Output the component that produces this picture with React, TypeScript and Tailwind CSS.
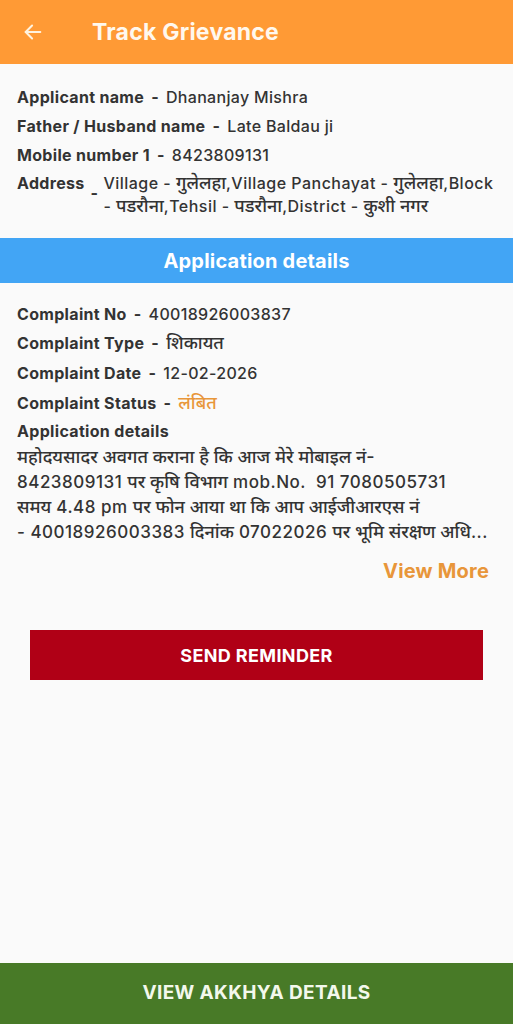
import React from "react";

const font = { fontFamily: 'Inter, "Noto Sans", "Noto Sans Devanagari", "Lohit Devanagari", sans-serif' };

function D({ children }: { children: React.ReactNode }) {
  return <span className="text-[18px] leading-none tracking-normal">{children}</span>;
}

function Row({ label, value, valueClass = "", h = "h-[29px]" }: { label: string; value: React.ReactNode; valueClass?: string; h?: string }) {
  return (
    <div className={`flex items-center whitespace-nowrap text-[16px] tracking-[0.02em] text-[#333333] ${h}`}>
      <span className="font-bold">{label}</span>
      <span className="ml-[7px] mr-[7px] font-bold">-</span>
      <span className={`font-medium ${valueClass}`}>{value}</span>
    </div>
  );
}

export default function App() {
  return (
    <div className="flex h-[1024px] w-[513px] flex-col bg-[#fafafa]" style={font}>
      <header className="flex h-[64px] shrink-0 items-center bg-[#ff9a35] pl-[22px]">
        <svg width="22" height="22" viewBox="0 0 24 24" fill="none" stroke="#fff3e0" strokeWidth="2.2" strokeLinecap="round" strokeLinejoin="round">
          <path d="M20 12H4" />
          <path d="M11 5l-7 7 7 7" />
        </svg>
        <h1 className="ml-[48px] text-[23px] font-bold tracking-[0.01em] text-[#fff8ee]">Track Grievance</h1>
      </header>

      <section className="px-[17px] pt-[18px] pb-[20px]">
        <Row label="Applicant name" value="Dhananjay Mishra" />
        <Row label="Father / Husband name" value="Late Baldau ji" />
        <Row label="Mobile number 1" value="8423809131" />
        <div className="flex text-[16px] tracking-[0.02em] text-[#333333]">
          <span className="font-bold leading-[29px]">Address</span>
          <span className="ml-[6px] mr-[5px] mt-[10px] font-bold leading-[29px]">-</span>
          <span className="whitespace-nowrap pt-[3px] font-medium leading-[23px] tracking-[0.03em]">
            Village - <D>गुलेलहा</D>,Village Panchayat - <D>गुलेलहा</D>,Block
            <br />- <D>पडरौना</D>,Tehsil - <D>पडरौना</D>,District - <D>कुशी नगर</D>
          </span>
        </div>
      </section>

      <div className="flex h-[45px] shrink-0 items-center justify-center bg-[#42a5f5] text-[20px] font-bold tracking-[0.01em] text-white">
        Application details
      </div>

      <section className="px-[17px] pt-[16px]">
        <Row label="Complaint No" value="40018926003837" />
        <Row label="Complaint Type" value={<D>शिकायत</D>} />
        <Row label="Complaint Date" value="12-02-2026" h="h-[32px]" />
        <Row label="Complaint Status" value={<D>लंबित</D>} valueClass="text-[#e8963a]" h="h-[28px]" />
        <div className="text-[16px] font-bold leading-[28px] tracking-[0.02em] text-[#333333]">Application details</div>
        <p className="whitespace-nowrap text-[17px] font-medium leading-[25px] tracking-[0.03em] text-[#333333]">
          <D>महोदयसादर अवगत कराना है कि आज मेरे मोबाइल नं-</D>
          <br />8423809131 <D>पर कृषि विभाग</D> mob.No.&nbsp; 91 7080505731
          <br /><D>समय</D> 4.48 pm <D>पर फोन आया था कि आप आईजीआरएस नं</D>
          <br />- 40018926003383 <D>दिनांक</D> 07022026 <D>पर भूमि संरक्षण अधि</D>...
        </p>
        <div className="mt-[11px] flex justify-end pr-[7px]">
          <span className="text-[20px] font-bold tracking-[0.01em] text-[#e8963a]">View More</span>
        </div>
      </section>

      <div className="mt-[44px] px-[30px]">
        <button className="flex h-[50px] w-[453px] items-center justify-center bg-[#b00016] text-[18px] font-bold tracking-[0.02em] text-white">
          SEND REMINDER
        </button>
      </div>

      <div className="mt-auto flex h-[61px] shrink-0 items-center justify-center bg-[#487a27] text-[19px] font-bold tracking-[0.02em] text-[#f3f8ec]">
        VIEW AKKHYA DETAILS
      </div>
    </div>
  );
}
